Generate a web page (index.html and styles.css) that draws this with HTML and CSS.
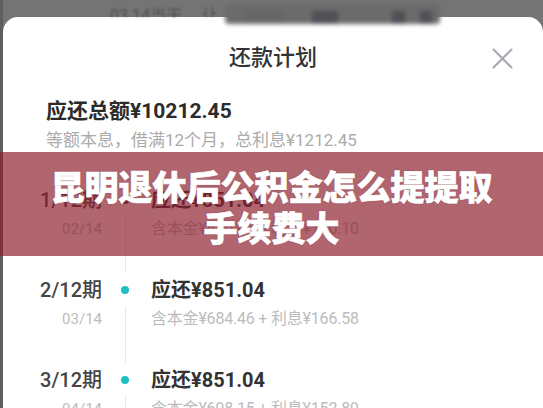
FILE: index.html
```html
<!DOCTYPE html>
<html lang="zh-CN">
<head>
<meta charset="utf-8">
<title>还款计划</title>
<link rel="stylesheet" href="styles.css">
</head>
<body>
<div class="status"><span class="status-text">03.14当天 ，让</span></div>
<div class="smudge">
  <span class="blk blk-a"></span>
  <span class="blk blk-b"></span>
  <span class="blk blk-c"></span>
  <span class="blk blk-d"></span>
</div>
<main class="sheet">
  <header class="sheet-head">
    <h1 class="title">还款计划</h1>
    <span class="close">
      <svg width="21" height="21" viewBox="0 0 21 21"><path d="M1.5 1.5 L19.5 19.5 M19.5 1.5 L1.5 19.5" stroke="#a6a6b6" stroke-width="2" fill="none" stroke-linecap="round"/></svg>
    </span>
  </header>
  <section class="summary">
    <div class="total">应还总额¥10212.45</div>
    <div class="note">等额本息，借满12个月，总利息¥1212.45</div>
  </section>
  <ol class="plan">
    <li class="item">
      <span class="period">1/12期</span>
      <span class="dot dot-past"></span>
      <span class="due">应还¥851.04</span>
      <span class="date">02/14</span>
      <span class="rail"></span>
      <span class="split">含本金¥670.94 + 利息¥180.10</span>
    </li>
    <li class="item">
      <span class="period">2/12期</span>
      <span class="dot"></span>
      <span class="due">应还¥851.04</span>
      <span class="date">03/14</span>
      <span class="rail"></span>
      <span class="split">含本金¥684.46 + 利息¥166.58</span>
    </li>
    <li class="item">
      <span class="period">3/12期</span>
      <span class="dot"></span>
      <span class="due">应还¥851.04</span>
      <span class="date">04/14</span>
      <span class="rail"></span>
      <span class="split">含本金¥698.15 + 利息¥152.89</span>
    </li>
  </ol>
</main>
<div class="banner">
  <p class="banner-text">昆明退休后公积金怎么提提取<br>手续费大</p>
</div>
</body>
</html>
```

FILE: styles.css
```css
* { box-sizing: border-box; }

html, body {
  margin: 0;
  padding: 0;
}

body {
  width: 543px;
  height: 408px;
  overflow: hidden;
  position: relative;
  background: linear-gradient(to right, #5e5e5e 0, #5e5e5e 3px, #747474 3px);
  font-family: Roboto, "Noto Sans CJK SC", sans-serif;
}

.status {
  height: 17px;
  overflow: hidden;
  padding: 6px 0 0 110px;
  line-height: 20px;
  font-size: 16px;
  color: #4f4f4f;
  filter: blur(0.8px);
}

.smudge {
  position: absolute;
  top: 4px;
  left: 225px;
  width: 215px;
  height: 20px;
  background: #6b6b6b;
  border-radius: 4px;
  filter: blur(2px);
  z-index: 2;
}

.blk {
  position: absolute;
  top: 7px;
  height: 13px;
  background: #505056;
}
.blk-a { left: 20px; width: 40px; background: #676767; }
.blk-b { left: 87px; width: 26px; }
.blk-c { left: 167px; width: 13px; }
.blk-d { left: 195px; width: 12px; }

.sheet {
  margin-left: 3px;
  height: 391px;
  background: #fff;
  border-radius: 15px 15px 0 0;
}

.sheet-head {
  display: grid;
  grid-template-columns: 1fr auto 1fr;
  align-items: center;
  padding-top: 26px;
}

.title {
  grid-column: 2;
  margin: 0;
  font-size: 22px;
  line-height: 30px;
  font-weight: 500;
  color: #333;
}

.close {
  grid-column: 3;
  justify-self: end;
  margin-right: 30px;
  width: 21px;
  height: 21px;
  display: flex;
}

.summary {
  padding: 24px 0 0 43px;
}

.total {
  font-size: 21px;
  line-height: 28px;
  font-weight: 700;
  color: #2b2b2b;
}

.note {
  margin-top: 3px;
  font-size: 17px;
  line-height: 24px;
  color: #ababab;
}

.plan {
  list-style: none;
  margin: 34px 0 0;
  padding: 0;
}

.item {
  display: grid;
  grid-template-columns: 99px 46px 1fr;
  grid-template-rows: 28px 62px;
  align-items: center;
}

.period {
  text-align: right;
  font-size: 20px;
  line-height: 28px;
  font-weight: 500;
  color: #454545;
}

.dot {
  justify-self: center;
  width: 8px;
  height: 8px;
  border-radius: 50%;
  background: #1dbfc1;
}

.dot-past { background: #444; }

.due {
  padding-left: 3px;
  font-size: 20px;
  line-height: 28px;
  font-weight: 700;
  color: #333;
}

.date {
  align-self: start;
  text-align: right;
  font-size: 15px;
  line-height: 30px;
  color: #bcbcbc;
}

.rail {
  align-self: start;
  justify-self: center;
  width: 1px;
  height: 57px;
  margin-top: 2px;
  background: #e8e8e8;
}

.split {
  align-self: start;
  padding-left: 3px;
  font-size: 16px;
  line-height: 30px;
  letter-spacing: -0.2px;
  color: #bcbcbc;
}

.banner {
  position: absolute;
  top: 152px;
  left: 0;
  width: 543px;
  height: 104px;
  display: flex;
  align-items: center;
  justify-content: center;
  padding-top: 4px;
  background: rgba(139, 28, 43, 0.68);
  z-index: 3;
}

.banner-text {
  margin: 0;
  text-align: center;
  font-family: "Noto Sans CJK SC", sans-serif;
  font-size: 34px;
  line-height: 41px;
  font-weight: 900;
  color: #fff;
  -webkit-text-stroke: 0.7px #fff;
  text-shadow: 0 0 2px rgba(80, 20, 30, 0.4);
}
```
